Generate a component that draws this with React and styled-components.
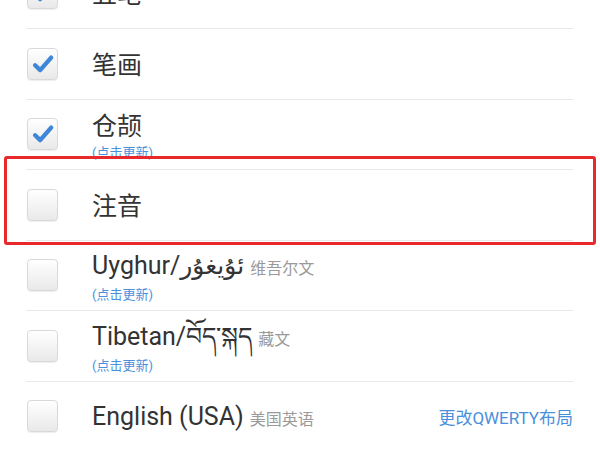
import React from "react";
import styled, { createGlobalStyle } from "styled-components";

const GlobalStyle = createGlobalStyle`
  html, body {
    margin: 0;
    padding: 0;
    background: #ffffff;
    overflow: hidden;
  }
  body {
    font-family: Roboto, "Noto Sans CJK SC", "DejaVu Sans", sans-serif;
  }
`;

const languages = [
  { name: "五笔", checked: true },
  { name: "笔画", checked: true },
  { name: "仓颉", checked: true, update: true },
  { name: "注音", highlight: true },
  { name: "Uyghur/ئۇيغۇر", note: "维吾尔文", update: true },
  { name: "Tibetan/བོད་སྐད", note: "藏文", update: true },
  { name: "English (USA)", note: "美国英语", action: "更改QWERTY布局" },
];

const App = () => {
  return (
    <Screen>
      <GlobalStyle />
      <List>
        {languages.map((lang) => (
          <Row key={lang.name} $highlight={lang.highlight}>
            <Check $checked={lang.checked}>
              {lang.checked && (
                <svg width="28" height="28" viewBox="0 0 22 22">
                  <path
                    d="M4.8 12 L8.8 15.8 L17.4 6"
                    fill="none"
                    stroke="#3d86d8"
                    strokeWidth="3.4"
                    strokeLinecap="round"
                    strokeLinejoin="round"
                  />
                </svg>
              )}
            </Check>
            <Label>
              <Title>
                {lang.name}
                {lang.note && <Note>{lang.note}</Note>}
              </Title>
              {lang.update && <Update>(点击更新)</Update>}
            </Label>
            {lang.action && <Action>{lang.action}</Action>}
          </Row>
        ))}
      </List>
    </Screen>
  );
};

const Screen = styled.div`
  position: relative;
  width: 600px;
  height: 450px;
  overflow: hidden;
  background: #ffffff;
`;

const List = styled.div`
  margin-top: -41.5px;
  padding: 0 27px 0 26px;
`;

const Row = styled.div`
  position: relative;
  box-sizing: border-box;
  height: 70.5px;
  display: flex;
  align-items: center;
  border-bottom: 1px solid #e8e8e8;

  ${(p) =>
    p.$highlight &&
    `
    &::after {
      content: "";
      position: absolute;
      top: -14px;
      bottom: -5px;
      left: -22px;
      right: -23px;
      border: 3px solid #e8282b;
      border-radius: 3px;
      pointer-events: none;
    }
  `}
`;

const Check = styled.div`
  box-sizing: border-box;
  width: 31px;
  height: 32px;
  margin-left: 1px;
  flex-shrink: 0;
  display: flex;
  align-items: center;
  justify-content: center;
  border: 1px solid #d9d9d9;
  border-radius: 4px;
  background: linear-gradient(#ffffff, #e9e9e9);
  box-shadow: 0 1px 1px rgba(0, 0, 0, 0.07);
`;

const Label = styled.div`
  display: flex;
  flex-direction: column;
  margin-left: 34px;
  padding-top: 4px;
`;

const Title = styled.div`
  display: flex;
  align-items: baseline;
  font-size: 25px;
  line-height: 30px;
  color: #333333;
`;

const Note = styled.span`
  margin-left: 6px;
  font-size: 16px;
  color: #9a9a9a;
`;

const Update = styled.div`
  margin-top: 3px;
  font-size: 13px;
  line-height: 16px;
  color: #4a8fdc;
`;

const Action = styled.div`
  margin-left: auto;
  font-size: 17px;
  color: #4a8fdc;
`;

export default App;
